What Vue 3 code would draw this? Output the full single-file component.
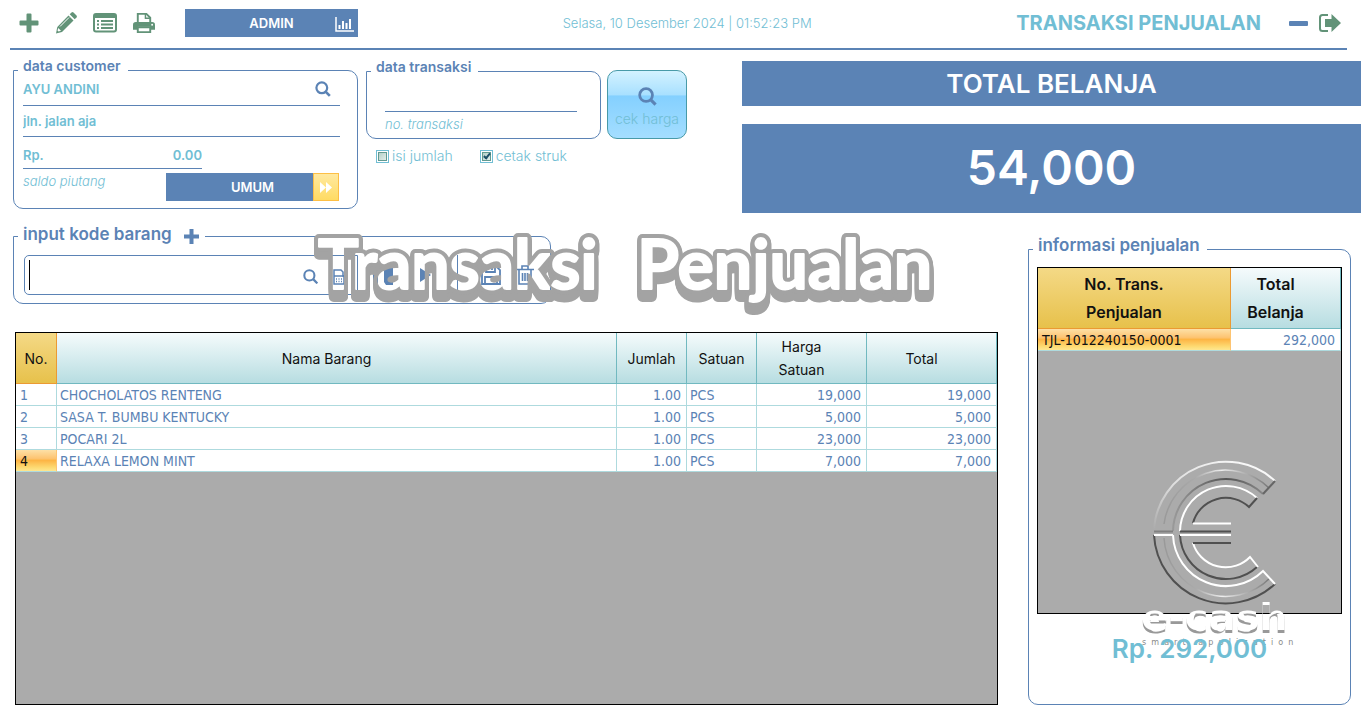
<script setup>
import { ref } from 'vue'

const customer = ref('AYU ANDINI')
const address = ref('jln. jalan aja')
const balance = ref('0.00')
const transactionNo = ref('')
const code = ref('')
const fillQty = ref(false)
const printReceipt = ref(true)

const items = [
  { no: 1, name: 'CHOCHOLATOS RENTENG', qty: '1.00', unit: 'PCS', price: '19,000', total: '19,000' },
  { no: 2, name: 'SASA T. BUMBU KENTUCKY', qty: '1.00', unit: 'PCS', price: '5,000', total: '5,000' },
  { no: 3, name: 'POCARI 2L', qty: '1.00', unit: 'PCS', price: '23,000', total: '23,000' },
  { no: 4, name: 'RELAXA LEMON MINT', qty: '1.00', unit: 'PCS', price: '7,000', total: '7,000' },
]
const selected = 4
const sales = [{ no: 'TJL-1012240150-0001', total: '292,000' }]
const tagline = 'smart application'.split('').join('  ')
const depth = [1, 2, 3, 4, 5, 6, 7, 8]
</script>

<template>
  <div class="page">
    <header class="topbar">
      <nav class="tools">
        <button type="button" aria-label="Tambah">
          <svg width="20" height="20" viewBox="0 0 20 20"><path d="M7.500 1.500Q7.500.500 8.500.500h3q1 0 1 1v6h6q1 0 1 1v3q0 1-1 1h-6v6q0 1-1 1h-3q-1 0-1-1v-6h-6q-1 0-1-1v-3q0-1 1-1h6z" fill="#629378" /></svg>
        </button>
        <button type="button" aria-label="Ubah">
          <svg width="22" height="22" viewBox="0 0 22 22"><path d="M13.500 3.500l5 5L7 20l-6 1.500L2.300 15z" fill="#629378" /><path d="M14.700 2.300l1.800-1.800q1-.8 2 0l3 3q.8 1 0 2l-1.800 1.800z" fill="#629378" /><path d="M5 14.500l9-9" stroke="#fff" stroke-width="1" /><path d="M3.300 16l2.700 2.700-2.500.8-1-1z" fill="#fff" /></svg>
        </button>
        <button type="button" aria-label="Daftar">
          <svg width="24" height="20" viewBox="0 0 24 20"><rect x="1" y="1" width="22" height="17.500" rx="2" fill="none" stroke="#629378" stroke-width="2" /><path d="M1 1h22v4H1z" fill="#629378" /><path d="M4 8h2m2 0h12M4 11.500h2m2 0h12M4 15h2m2 0h12" stroke="#629378" stroke-width="1.800" /></svg>
        </button>
        <button type="button" aria-label="Cetak">
          <svg width="22" height="22" viewBox="0 0 23 22"><path d="M5 11V1.500h9l4 4V11" fill="none" stroke="#629378" stroke-width="2" /><path d="M13 1v5h5" fill="none" stroke="#629378" stroke-width="1.500" /><path d="M3 10h17q3 0 3 3v5h-5v-3H5v3H0v-5q0-3 3-3z" fill="#629378" /><path d="M5 15.500h13v5H5z" fill="#fff" stroke="#629378" stroke-width="2" /><circle cx="20" cy="12.800" r="1" fill="#fff" /></svg>
        </button>
      </nav>
      <div class="pill admin">
        <button type="button" class="pill-label">ADMIN</button>
        <svg class="chart" width="19" height="15" viewBox="0 0 19 15"><path d="M1 0v14h18" fill="none" stroke="#fff" stroke-width="1.500" /><path d="M4.500 8v4M8 4v8M11.500 6v6M15 2v10" stroke="#fff" stroke-width="2" /></svg>
      </div>
      <time class="clock">Selasa, 10 Desember 2024 | 01:52:23 PM</time>
      <h1>TRANSAKSI PENJUALAN</h1>
      <button type="button" class="minimize" aria-label="Kecilkan"><span></span></button>
      <button type="button" class="exit" aria-label="Keluar">
        <svg width="22" height="18" viewBox="0 0 22 18"><path d="M9 1H3.500Q1 1 1 3.500v11Q1 17 3.500 17H9" fill="none" stroke="#629378" stroke-width="2" /><path d="M6 5h6.500V0L22 9l-9.500 9v-5H6z" fill="#629378" /></svg>
      </button>
    </header>

    <section class="summary">
      <fieldset class="panel customer">
        <legend>data customer</legend>
        <div class="line name-line">
          <input v-model="customer" aria-label="Nama customer" />
          <button type="button" aria-label="Cari customer">
            <svg width="16" height="16" viewBox="0 0 16 16"><circle cx="6.800" cy="6.800" r="5.400" fill="none" stroke="#5b83b5" stroke-width="2.200" /><path d="M10.800 10.800l4 4" stroke="#5b83b5" stroke-width="2.600" /></svg>
          </button>
        </div>
        <div class="line address-line"><input v-model="address" aria-label="Alamat customer" /></div>
        <div class="line balance-line"><span>Rp.</span><input id="saldo" v-model="balance" /></div>
        <div class="customer-foot">
          <label for="saldo" class="hint">saldo piutang</label>
          <div class="pill">
            <button type="button" class="pill-label">UMUM</button>
            <button type="button" class="next" aria-label="Berikutnya">
              <svg width="12" height="11" viewBox="0 0 12 11"><path d="M0 0l6 5.500L0 11zM6 0l6 5.500L6 11z" fill="#fff" /></svg>
            </button>
          </div>
        </div>
      </fieldset>

      <div class="transaction-col">
        <fieldset class="panel transaction">
          <legend>data transaksi</legend>
          <div class="line"><input id="notrx" v-model="transactionNo" /></div>
          <label for="notrx" class="hint">no. transaksi</label>
        </fieldset>
        <div class="checks">
          <label><input v-model="fillQty" type="checkbox" />isi jumlah</label>
          <label><input v-model="printReceipt" type="checkbox" />cetak struk</label>
        </div>
      </div>

      <button type="button" class="price-check">
        <svg width="19" height="19" viewBox="0 0 16 16"><circle cx="6.800" cy="6.800" r="5.400" fill="none" stroke="#5b83b5" stroke-width="2.300" /><path d="M10.800 10.800l4 4" stroke="#5b83b5" stroke-width="2.600" /></svg>
        <span>cek harga</span>
      </button>

      <div class="totals">
        <h2>TOTAL BELANJA</h2>
        <output>54,000</output>
      </div>
    </section>

    <main class="work">
      <section class="entry">
        <fieldset class="panel code">
          <legend>
            <label for="kode">input kode barang</label>
            <svg width="15" height="15" viewBox="0 0 15 15"><path d="M5.500 0h4v5.500H15v4H9.500V15h-4V9.500H0v-4h5.500z" fill="#5b83b5" /></svg>
          </legend>
          <div class="code-row">
            <div class="code-box">
              <span class="caret"></span>
              <input id="kode" v-model="code" />
              <button type="button" aria-label="Cari barang">
                <svg width="15" height="15" viewBox="0 0 16 16"><circle cx="6.800" cy="6.800" r="5.400" fill="none" stroke="#5b83b5" stroke-width="2.200" /><path d="M10.800 10.800l4.500 4.500" stroke="#5b83b5" stroke-width="2.400" /></svg>
              </button>
              <button type="button" aria-label="Cetak barang">
                <svg width="16" height="16" viewBox="0 0 16 16"><path d="M0 4h3v12H0z" fill="#5b83b5" /><path d="M5 15V1h7l2 2v4h1v8z" fill="none" stroke="#5b83b5" stroke-width="1.500" /><path d="M5 7h10M7 10h1m1.500 0h1m1.500 0h1M7 12.500h1m1.500 0h1m1.500 0h1" stroke="#5b83b5" stroke-width="1.300" /></svg>
              </button>
            </div>
            <button type="button" class="act-bars" aria-label="Jeda">
              <svg width="20" height="20" viewBox="0 0 20 20"><path d="M0 2h5v18H0zM11 0h9v20h-7l-2-3z" fill="#5b83b5" /></svg>
            </button>
            <button type="button" class="act-play" aria-label="Lanjut">
              <svg width="11" height="14" viewBox="0 0 11 14"><path d="M0 0l11 7L0 14z" fill="#5b83b5" /></svg>
            </button>
            <span class="divider"></span>
            <button type="button" class="act-save" aria-label="Simpan">
              <svg width="20" height="20" viewBox="0 0 20 20"><path d="M1 1h14l4 4v14H1zM5 1v6h9V1M4 19v-7h12v7M11 2v3" fill="none" stroke="#5b83b5" stroke-width="1.800" /></svg>
            </button>
            <button type="button" class="act-trash" aria-label="Hapus">
              <svg width="18" height="20" viewBox="0 0 18 20"><path d="M0 4.500h18M6 4V1h6v3M3 5v14h12V5M6.500 8v8M9 8v8M11.500 8v8" fill="none" stroke="#5b83b5" stroke-width="1.600" /></svg>
            </button>
          </div>
        </fieldset>

        <svg class="banner" width="640" height="110" viewBox="0 0 640 110" aria-hidden="true">
          <defs>
            <mask id="hollow" maskUnits="userSpaceOnUse" x="0" y="0" width="640" height="110">
              <path d="M0 0h640v110H0z" fill="#fff" />
              <use href="#banner-text" fill="#000" stroke="#000" stroke-width="2" stroke-linejoin="round" />
            </mask>
          </defs>
          <g mask="url(#hollow)" fill="#a3a3a3" stroke="#a3a3a3" stroke-width="10" stroke-linejoin="round">
            <use v-for="d in depth" :key="d" href="#banner-text" :y="d" />
            <text id="banner-text" x="8" y="74">Transaksi <tspan x="327">Penjualan</tspan></text>
          </g>
        </svg>

        <div class="grid-box">
          <table class="items">
            <colgroup><col class="c-no" /><col /><col class="c-qty" /><col class="c-qty" /><col class="c-price" /><col class="c-total" /></colgroup>
            <thead>
              <tr><th class="gold">No.</th><th class="sortable">Nama Barang</th><th>Jumlah</th><th>Satuan</th><th class="sortable">Harga<br />Satuan</th><th class="sortable">Total</th></tr>
            </thead>
            <tbody>
              <tr v-for="i in items" :key="i.no">
                <td :class="{ current: i.no === selected }">{{ i.no }}</td>
                <td>{{ i.name }}</td>
                <td class="num">{{ i.qty }}</td>
                <td>{{ i.unit }}</td>
                <td class="num">{{ i.price }}</td>
                <td class="num">{{ i.total }}</td>
              </tr>
            </tbody>
          </table>
        </div>
      </section>

      <fieldset class="panel info">
        <legend>informasi penjualan</legend>
        <div class="grid-box">
          <table class="sales">
            <colgroup><col /><col class="c-sum" /></colgroup>
            <thead>
              <tr><th class="gold sortable">No. Trans.<br />Penjualan</th><th class="sortable">Total<br />Belanja</th></tr>
            </thead>
            <tbody>
              <tr v-for="s in sales" :key="s.no"><td class="current">{{ s.no }}</td><td class="num">{{ s.total }}</td></tr>
            </tbody>
          </table>
        </div>
        <svg class="logo" width="160" height="200" viewBox="0 0 160 200" fill="none">
          <defs>
            <linearGradient id="rim" x1="0" y1="1" x2="1" y2="0"><stop offset="0" stop-color="#aaa" /><stop offset=".4" stop-color="#ddd" /><stop offset="1" stop-color="#fff" /></linearGradient>
            <linearGradient id="sheen" x1="0" y1="0" x2="1" y2="0"><stop offset="0" stop-color="#999" /><stop offset=".3" stop-color="#aaa" /><stop offset=".55" stop-color="#eee" /><stop offset=".8" stop-color="#aaa" /><stop offset="1" stop-color="#777" /></linearGradient>
            <linearGradient id="edge" x1="0" y1="0" x2="1" y2="0"><stop offset="0" stop-color="#999" /><stop offset=".6" stop-color="#555" /><stop offset="1" stop-color="#888" /></linearGradient>
            <mask id="lit" maskUnits="userSpaceOnUse" x="0" y="140" width="160" height="60">
              <path d="M0 140h160v60H0z" fill="#fff" />
              <use href="#brand-text" y="3" fill="#000" />
            </mask>
            <mask id="shade" maskUnits="userSpaceOnUse" x="0" y="140" width="160" height="60">
              <path d="M0 140h160v60H0z" fill="#fff" />
              <use href="#brand-text" y="-3" fill="#000" />
            </mask>
          </defs>
          <g stroke-width="2">
            <path d="M14 81A72 72 0 0 1 135 31" stroke="url(#rim)" />
            <path d="M24 74A62 62 0 0 1 129 38" stroke="url(#sheen)" stroke-width="1.500" />
            <path d="M33 81A53 53 0 0 1 123 44" stroke="url(#edge)" />
            <path d="M135 31l-12 13" stroke="#666" />
            <path d="M40 81A46 46 0 0 1 117 48" stroke="#fff" />
            <path d="M53 73A34 34 0 0 1 109 57l8-9" stroke="#505050" />
            <path d="M14 85A72 72 0 0 0 135 134" stroke="#505050" />
            <path d="M24 88A62 62 0 0 0 130 128" stroke="url(#sheen)" stroke-width="1.500" />
            <path d="M33 85A53 53 0 0 0 123 121l12 13" stroke="#fff" />
            <path d="M40 85A46 46 0 0 0 117 117" stroke="#505050" />
            <path d="M53 93A34 34 0 0 0 110 107l8 10" stroke="#fff" />
            <path d="M53 73.500h38M40 85h51M14 85h19" stroke="#fff" />
            <path d="M14 81.500h19" stroke="#808080" />
            <path d="M40 81.500h51M53 93h38" stroke="#505050" />
          </g>
          <g fill="#999" mask="url(#shade)"><text id="brand-text" x="1" y="183">e-cash</text></g>
          <g fill="#fff" mask="url(#lit)"><use href="#brand-text" /></g>
          <text class="tagline" x="2" y="195" fill="#8a8a8a">{{ tagline }}</text>
        </svg>
        <output class="grand">Rp. 292,000</output>
      </fieldset>
    </main>
  </div>
</template>

<style>
body { background: #fff; }
</style>

<style scoped>
.page { display: flex; flex-direction: column; min-height: 100vh; box-sizing: border-box; padding-bottom: 14px; overflow: hidden; background: #fff; color: #71bed4; font-family: Inter, "Liberation Sans", sans-serif; font-size: 13px; line-height: 16px; }
.page *, .page *::before, .page *::after { box-sizing: border-box; }
button { appearance: none; display: flex; align-items: center; justify-content: center; padding: 0; border: 0; background: none; color: inherit; font: inherit; cursor: pointer; }
input { min-width: 0; padding: 0; border: 0; outline: 0; background: none; color: inherit; font: inherit; }
svg { display: block; flex: none; }
.topbar { position: relative; display: flex; align-items: center; height: 50px; margin: 0 18px 0 10px; padding: 0 6px 2px 9px; border-bottom: 2px solid #5b83b5; }
.tools { display: flex; align-items: center; gap: 16px; }
.pill { position: relative; width: 173px; height: 28px; background: #5b83b5; color: #fff; }
.pill-label { width: 100%; height: 100%; font-weight: 600; }
.admin { margin-left: 30px; }
.chart { position: absolute; right: 4px; bottom: 5px; pointer-events: none; }
.clock { flex: 1; text-align: center; font-weight: 300; }
h1 { margin: 0 28px 0 0; font-size: 20px; line-height: 28px; font-weight: 700; }
.minimize span { width: 19px; height: 5px; border-radius: 1px; background: #5b83b5; }
.exit { margin-left: 11px; }

.summary { display: flex; align-items: flex-start; margin-top: 8px; padding: 0 4px 0 13px; }
.panel { min-width: 0; margin: 0; border: 1px solid #5b83b5; border-radius: 0 10px 10px 10px; }
legend { margin-left: -5px; padding: 0 7px 8px 5px; color: #5b83b5; font-size: 14px; font-weight: 600; }
.customer { width: 345px; padding: 0 17px 7px 9px; }
.line { display: flex; align-items: center; border-bottom: 1px solid #5b83b5; font-weight: 600; }
.line input { flex: 1; }
.name-line { height: 24px; padding: 0 9px 10px 0; }
.address-line { height: 31px; }
.balance-line { width: 179px; height: 32px; padding-top: 4px; }
.balance-line input { text-align: right; }
.customer-foot { display: flex; justify-content: space-between; padding: 4px 1px 0 0; }
.hint { font-style: italic; font-weight: 300; }
.next { position: absolute; top: 0; right: 0; width: 26px; height: 28px; border: 1px solid #fdbf45; background: linear-gradient(#ffe9a0, #ffdb63); }
.transaction-col { width: 235px; margin: 1px 6px 0 8px; }
.transaction { height: 80px; padding: 0 23px 0 18px; }
.transaction legend { margin-left: -14px; }
.transaction .line { height: 29px; }
.transaction .hint { display: block; padding-top: 4px; }
.checks { display: flex; gap: 27px; padding: 9px 0 0 10px; font-size: 14px; font-weight: 300; }
.checks label { display: flex; align-items: center; gap: 3px; }
.checks input { appearance: none; position: relative; width: 13px; height: 13px; margin: 0; border: 1px solid #71bed4; background: linear-gradient(135deg, #a9c9c0, #eef5f2); box-shadow: inset 0 0 0 1px #fff, inset 0 0 0 2px #629a90; }
.checks input:checked::after { content: ""; position: absolute; left: 4px; top: 1px; width: 4px; height: 7px; border: solid #1c5068; border-width: 0 2px 2px 0; transform: rotate(40deg); }
.price-check { flex-direction: column; gap: 5px; width: 80px; height: 69px; margin-top: 12px; padding-top: 5px; border: 1px solid #489aa8; border-radius: 10px; background: linear-gradient(#d3f2ff, #a8e0ff 36%, #84d0ff 37%, #a4deff); font-weight: 300; font-size: 14px; }
.totals { display: flex; flex: 1; flex-direction: column; gap: 18px; margin: 3px 0 0 55px; color: #fff; text-align: center; }
h2 { margin: 0; background: #5b83b5; font-size: 26px; line-height: 45px; font-weight: 600; }
.totals output { padding-bottom: 1px; background: #5b83b5; font-size: 48px; line-height: 88px; font-weight: 600; }

.work { display: flex; flex: 1; gap: 30px; margin-top: 10px; padding: 0 14px 0 13px; }
.entry { position: relative; display: flex; flex: 1; flex-direction: column; min-width: 0; }
.code { width: 538px; padding: 5px 16px 8px 10px; }
.code legend { display: flex; align-items: center; gap: 12px; margin-left: -6px; padding: 0 6px 6px 5px; font-size: 17px; line-height: 20px; }
.code legend svg { margin-top: 6px; }
.code-row { display: flex; align-items: center; height: 40px; }
.code-box { display: flex; align-items: center; gap: 11px; width: 334px; height: 40px; padding: 3px 12px 0 4px; border: 1px solid #5b83b5; border-radius: 5px 0 0 5px; }
.code-box input { flex: 1; height: 30px; font-size: 16px; }
.caret { width: 1px; height: 30px; margin: 0 -10px 3px 0; background: #000; }
.act-bars { margin-left: 15px; }
.act-play { margin-left: 27px; }
.divider { align-self: stretch; width: 1px; margin: 0 23px 0 26px; background: #5b83b5; }
.act-trash { margin-left: 15px; }
.banner { position: absolute; top: -8px; left: 297px; pointer-events: none; }
#banner-text { font-family: Lato, sans-serif; font-size: 68px; font-weight: 700; }
.grid-box { flex: 1; border: 1px solid #000; background: #ababab; }
.entry .grid-box { margin: 28px 0 0 2px; }
table { width: 100%; border-collapse: separate; border-spacing: 0; table-layout: fixed; font-family: "DejaVu Sans Condensed", "Noto Sans", sans-serif; font-size: 14px; line-height: 16px; }
th { padding: 0; border: solid #71b9c0; border-width: 0 1px 1px 0; background: linear-gradient(#f5fbfc, #b7dde1); color: #111; font-family: Inter, sans-serif; font-weight: 400; }
.sortable { padding-right: 20px; }
th.gold { border-color: #eb9a33; background: linear-gradient(#f4d986, #e7c14b); }
td { height: 22px; padding: 0 5px 0 3px; border: solid #aedade; border-width: 0 1px 1px 0; background: #fff; color: #5b83b5; white-space: nowrap; }
td:first-child { padding-left: 4px; }
.num { text-align: right; }
td.current { background: linear-gradient(#fde0a6, #fdc472 40%, #fdb545 50%, #fddc75 85%, #fee690); color: #111; border-right-color: #fdc472; }
.items th { height: 51px; line-height: 23px; }
.c-no { width: 41px; }
.c-qty { width: 70px; }
.c-price { width: 110px; }
.c-total { width: 130px; }
.info { position: relative; display: flex; flex-direction: column; width: 323px; margin-top: 12px; padding: 4px 8px 0; }
.info legend { margin-left: -4px; font-size: 17px; line-height: 20px; }
.sales th { height: 61px; font-size: 16px; line-height: 28px; font-weight: 600; }
.c-sum { width: 110px; }
.logo { position: absolute; right: 50px; bottom: 54px; pointer-events: none; }
#brand-text { font-family: "DejaVu Sans", sans-serif; font-size: 40px; font-weight: 700; }
.tagline { font-family: "DejaVu Sans", sans-serif; font-size: 8px; white-space: pre; }
.grand { position: relative; height: 90px; padding-top: 20px; text-align: center; font-size: 26px; line-height: 30px; font-weight: 600; }
</style>
